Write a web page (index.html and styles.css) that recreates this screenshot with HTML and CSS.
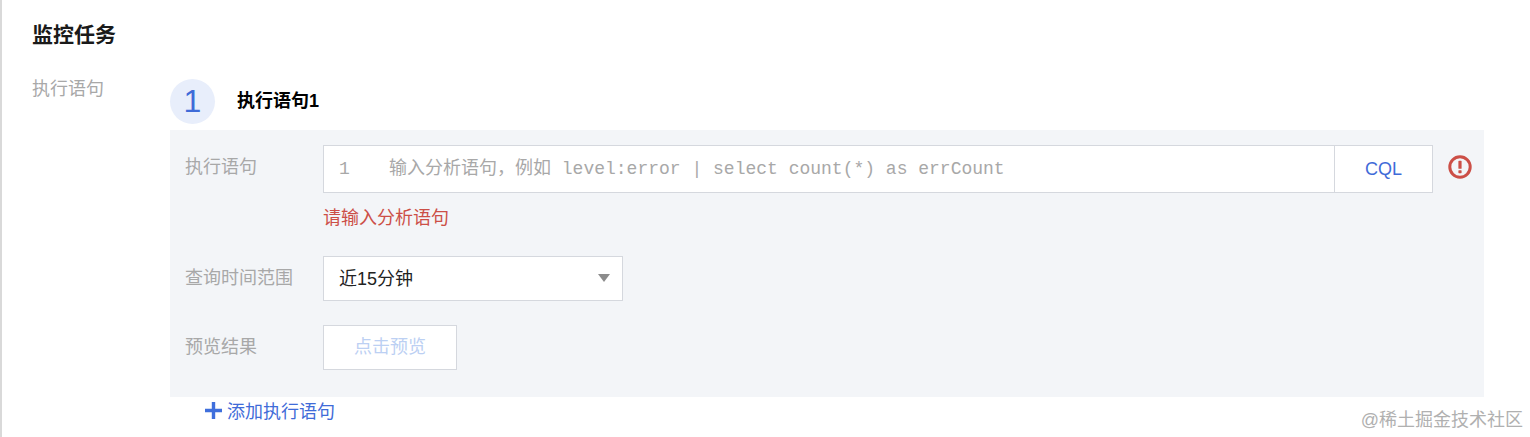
FILE: index.html
```html
<!DOCTYPE html>
<html lang="zh">
<head>
<meta charset="utf-8">
<title>监控任务</title>
<link rel="stylesheet" href="styles.css">
</head>
<body>
<div class="page">
  <h2 class="title">监控任务</h2>
  <div class="section">
    <div class="section-label">执行语句</div>
    <div class="section-body">
      <div class="step">
        <span class="step-num">1</span>
        <span class="step-title">执行语句1</span>
      </div>
      <div class="panel">
        <div class="row row-query">
          <div class="label">执行语句</div>
          <div class="field">
            <div class="editor">
              <div class="code">
                <span class="line-no">1</span>
                <span class="placeholder">输入分析语句，例如 level:error | select count(*) as errCount</span>
              </div>
              <div class="cql">CQL</div>
            </div>
            <div class="error">请输入分析语句</div>
          </div>
          <svg class="err-icon" width="24" height="24" viewBox="0 0 24 24" aria-hidden="true">
            <circle cx="12" cy="12" r="10.2" fill="none" stroke="#cc4f47" stroke-width="3"/>
            <rect x="10.4" y="5.8" width="3.2" height="8" rx="0.6" fill="#cc4f47"/>
            <rect x="10.4" y="15.2" width="3.2" height="3" rx="0.6" fill="#cc4f47"/>
          </svg>
        </div>
        <div class="row row-time">
          <div class="label">查询时间范围</div>
          <div class="select">
            <span>近15分钟</span>
            <span class="caret"></span>
          </div>
        </div>
        <div class="row row-preview">
          <div class="label">预览结果</div>
          <div class="btn">点击预览</div>
        </div>
      </div>
      <div class="add">
        <svg width="17" height="17" viewBox="0 0 17 17" aria-hidden="true">
          <path d="M6.8 0h3.4v6.8H17v3.4h-6.8V17H6.8v-6.8H0V6.8h6.8z" fill="#3f6fdc"/>
        </svg>
        <span>添加执行语句</span>
      </div>
    </div>
  </div>
</div>
<div class="watermark">@稀土掘金技术社区</div>
</body>
</html>
```
FILE: styles.css
```css
* { box-sizing: border-box; }
html, body { margin: 0; height: 437px; overflow: hidden; background: #fff; }
body {
  font-family: "Liberation Sans", "Noto Sans CJK SC", sans-serif;
  font-size: 18px;
  color: #111;
  position: relative;
}
.page {
  height: 437px;
  border-left: 2px solid #d9d9d9;
  padding: 21px 0 0 30px;
}
.title {
  margin: 0;
  font-size: 21px;
  line-height: 28px;
  font-weight: 700;
  color: #1a1a1a;
}
.section { display: flex; margin-top: 30px; }
.section-label {
  width: 138px;
  flex: none;
  line-height: 20px;
  color: #a8a8a8;
}
.section-body { width: 1314px; }
.step { display: flex; align-items: center; height: 45px; }
.step-num {
  width: 45px;
  height: 45px;
  border-radius: 50%;
  background: #e8eefb;
  color: #3f6bd8;
  font-size: 32px;
  line-height: 44px;
  text-align: center;
}
.step-title { margin-left: 22px; font-weight: 700; color: #000; line-height: 45px; }
.panel {
  margin-top: 6px;
  height: 267px;
  background: #f3f5f8;
  padding: 15px 0 0 15px;
}
.row { display: flex; }
.label { width: 138px; flex: none; color: #a8a8a8; line-height: 44px; }
.field { width: 1110px; flex: none; }
.editor {
  display: flex;
  height: 48px;
  background: #fff;
  border: 1px solid #d5d8de;
}
.code {
  flex: 1;
  display: flex;
  align-items: baseline;
  padding: 10px 0 0 15px;
  line-height: 26px;
  font-family: "Liberation Mono", "Noto Sans CJK SC", monospace;
  color: #a8a8a8;
  white-space: pre;
}
.line-no { width: 50px; flex: none; }
.cql {
  width: 98px;
  flex: none;
  border-left: 1px solid #d5d8de;
  color: #3f6bd8;
  text-align: center;
  line-height: 46px;
}
.error { margin-top: 13px; line-height: 25px; color: #cc4f47; }
.err-icon { margin: 10px 0 0 15px; flex: none; }
.row-time { margin-top: 25px; }
.select {
  width: 300px;
  height: 45px;
  background: #fff;
  border: 1px solid #d5d8de;
  display: flex;
  align-items: center;
  justify-content: space-between;
  padding: 0 12px 4px 15px;
  color: #222;
}
.caret {
  width: 0;
  height: 0;
  margin-top: 3px;
  border-left: 6px solid transparent;
  border-right: 6px solid transparent;
  border-top: 8px solid #8c8c8c;
}
.row-preview { margin-top: 24px; }
.btn {
  width: 134px;
  height: 45px;
  background: #fff;
  border: 1px solid #d5d8de;
  color: #bcd0f3;
  text-align: center;
  line-height: 43px;
}
.add {
  display: flex;
  align-items: center;
  gap: 5px;
  margin: 1px 0 0 35px;
  height: 24px;
  color: #3f6bd8;
}
.watermark {
  position: absolute;
  right: 7px;
  top: 408px;
  color: #b0b0b0;
  line-height: 24px;
  white-space: nowrap;
}
```
